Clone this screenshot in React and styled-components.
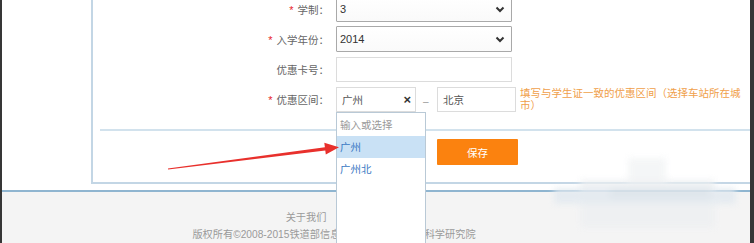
import styled, { createGlobalStyle } from "styled-components";

const Global = createGlobalStyle`
  html, body { margin: 0; padding: 0; }
  body {
    font-family: "Liberation Sans", "Noto Sans CJK SC", sans-serif;
    background: #3a3a3a;
  }
`;

const Frame = styled.div`
  width: 754px;
  height: 243px;
  display: flex;
  background: #363636;
  overflow: hidden;
`;

const Screen = styled.div`
  position: relative;
  flex: 1;
  margin: 0 4px 0 2px;
  background: #fff;
  display: flex;
  flex-direction: column;
`;

const Main = styled.div`
  height: 192px;
  padding-left: 89px;
`;

const Panel = styled.div`
  margin-top: -6px;
  border-left: 2px solid #c3d6e5;
  border-bottom: 2px solid #c3d6e5;
  padding: 0 0 17px 7px;
`;

const Row = styled.div`
  display: flex;
  align-items: center;
  gap: 7px;
  height: 30px;
`;

const Label = styled.div`
  width: 229px;
  text-align: right;
  font-size: 10.5px;
  color: #666;
  white-space: nowrap;
`;

const Star = styled.span`
  color: #e8262c;
  margin-right: 4px;
  font-size: 11px;
`;

const Select = styled.div`
  box-sizing: border-box;
  width: 176px;
  height: 26px;
  border: 1px solid #a9a9a9;
  border-radius: 1px;
  background: linear-gradient(#fff, #fafafa);
  display: flex;
  align-items: center;
  justify-content: space-between;
  padding: 0 6px 0 3px;
  font-size: 11px;
  color: #333;
`;

const Input = styled.div`
  position: relative;
  box-sizing: border-box;
  width: ${(p) => p.$w || 176}px;
  height: 25px;
  border: 1px solid #dcdcdc;
  display: flex;
  align-items: center;
  justify-content: space-between;
  padding: 0 4px 0 5px;
  font-size: 10.5px;
  color: #555;
`;

const Clear = styled.span`
  font-size: 13px;
  font-weight: bold;
  color: #333;
  line-height: 1;
`;

const Dash = styled.span`
  width: 7px;
  margin: 4px 0 0 0;
  color: #999;
  font-size: 10px;
`;

const Hint = styled.div`
  width: 224px;
  margin-left: -3px;
  align-self: flex-start;
  margin-top: 3px;
  font-size: 10.5px;
  line-height: 12px;
  color: #f0a04a;
`;

const Dropdown = styled.div`
  position: absolute;
  z-index: 3;
  top: 24px;
  left: -1px;
  box-sizing: border-box;
  width: 90px;
  height: 160px;
  padding-top: 1px;
  background: #fff;
  border: 1px solid #b9c9d6;
`;

const Option = styled.div`
  height: 22px;
  line-height: 22px;
  padding-left: 3px;
  font-size: 10.5px;
  color: ${(p) => (p.$placeholder ? "#999" : "#3a78c3")};
  background: ${(p) => (p.$active ? "#c9e1f5" : "transparent")};
`;

const Separator = styled.div`
  margin-top: 15px;
  height: 2px;
  background: #d2e2ed;
`;

const Actions = styled.div`
  display: flex;
  padding: 8px 0 0 337px;
`;

const SaveButton = styled.button`
  width: 81px;
  height: 26px;
  border: none;
  border-radius: 1px;
  background: #fb820f;
  color: #fff;
  font-family: inherit;
  font-size: 10.5px;
`;

const Footer = styled.footer`
  flex: 1;
  border-top: 2px solid #8fb5d0;
  background: #f4f4f4;
  padding: 17px 84px 0 0;
  text-align: center;
  font-size: 10.2px;
  line-height: 17px;
  color: #9a9a9a;
`;

const FooterLinks = styled.div`
  padding-right: 56px;
`;

const Overlay = styled.svg`
  position: absolute;
  left: -2px;
  top: 0;
  z-index: 4;
  pointer-events: none;
`;

const Mosaic = styled.div`
  position: absolute;
  z-index: 2;
  left: 548px;
  top: 158px;
  width: 190px;
  height: 75px;
  filter: blur(3px);
  opacity: 0.85;
`;

const Block = styled.div`
  position: absolute;
  left: ${(p) => p.$x}px;
  top: ${(p) => p.$y}px;
  width: ${(p) => p.$w}px;
  height: ${(p) => p.$h}px;
  background: ${(p) => p.$c};
`;

function Chevron() {
  return (
    <svg width="10" height="7" viewBox="0 0 10 7">
      <polyline points="1.5,1.5 5,5 8.5,1.5" fill="none" stroke="#333" strokeWidth="2" />
    </svg>
  );
}

export default function App() {
  return (
    <>
      <Global />
      <Frame>
        <Screen>
          <Main>
            <Panel>
              <Row>
                <Label><Star>*</Star>学制：</Label>
                <Select>3<Chevron /></Select>
              </Row>
              <Row>
                <Label><Star>*</Star>入学年份：</Label>
                <Select>2014<Chevron /></Select>
              </Row>
              <Row>
                <Label>优惠卡号：</Label>
                <Input />
              </Row>
              <Row>
                <Label><Star>*</Star>优惠区间：</Label>
                <Input $w={80}>
                  广州<Clear>×</Clear>
                  <Dropdown>
                    <Option $placeholder>输入或选择</Option>
                    <Option $active>广州</Option>
                    <Option>广州北</Option>
                  </Dropdown>
                </Input>
                <Dash>–</Dash>
                <Input $w={79}>北京</Input>
                <Hint>填写与学生证一致的优惠区间（选择车站所在城市）</Hint>
              </Row>
              <Separator />
              <Actions>
                <SaveButton>保存</SaveButton>
              </Actions>
            </Panel>
          </Main>
          <Footer>
            <FooterLinks>关于我们</FooterLinks>
            <div>版权所有©2008-2015铁道部信息技术中心 中国铁道科学研究院</div>
          </Footer>
          <Mosaic>
            <Block $x={78} $y={0} $w={38} $h={24} $c="#f3f5f6" />
            <Block $x={30} $y={22} $w={135} $h={48} $c="#eef0f2" />
            <Block $x={4} $y={30} $w={182} $h={16} $c="#e3eaf0" />
            <Block $x={60} $y={30} $w={100} $h={10} $c="#dbe3ea" />
          </Mosaic>
          <Overlay width="754" height="243" viewBox="0 0 754 243">
            <polygon
              points="168.1,169.6 325.3,150.4 325.8,154.4 339,147.2 324.3,142.8 324.9,147.2 167.9,168.4"
              fill="#e8302c"
            />
          </Overlay>
        </Screen>
      </Frame>
    </>
  );
}
